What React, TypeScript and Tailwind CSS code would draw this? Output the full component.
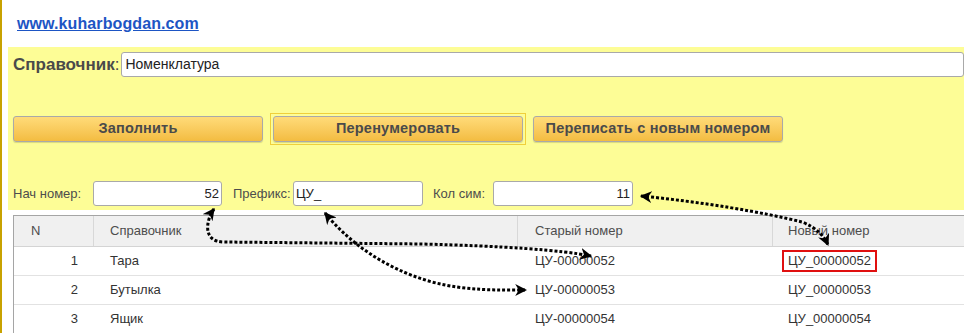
import React from "react";

const font = { fontFamily: '"Liberation Sans", Arial, sans-serif' };

function Btn({ children }: { children: React.ReactNode }) {
  return (
    <div className="w-[250px] h-[26px] rounded-[3px] border border-[#a9a9a9] bg-gradient-to-b from-[#ffdb78] to-[#f3bc40] flex items-center justify-center text-[14.5px] tracking-[0.2px] font-bold text-[#4a4a4a] shadow-[0_1px_1px_rgba(0,0,0,0.15)]">
      {children}
    </div>
  );
}

function Field({ w, value, right }: { w: string; value: string; right?: boolean }) {
  return (
    <div
      className={`${w} h-[25px] rounded-[3px] border border-[#a9a9a9] bg-white flex items-center text-[13px] text-[#222] ${
        right ? "justify-end pr-[2px]" : "pl-[2px]"
      }`}
    >
      {value}
    </div>
  );
}

const rows = [
  { n: "1", name: "Тара", old: "ЦУ-00000052", nw: "ЦУ_00000052" },
  { n: "2", name: "Бутылка", old: "ЦУ-00000053", nw: "ЦУ_00000053" },
  { n: "3", name: "Ящик", old: "ЦУ-00000054", nw: "ЦУ_00000054" },
];

export default function App() {
  return (
    <div className="relative w-[964px] h-[333px] overflow-hidden bg-white border-l-2 border-[#c8a200]" style={font}>
      <div className="h-[47px] pl-[15px] pt-[12px]">
        <a className="text-[16px] font-bold text-[#1d55c4] underline tracking-[0.1px]" href="#">
          www.kuharbogdan.com
        </a>
      </div>
      <div className="ml-[6px] h-[163px] bg-[#fdfd96] pl-[5px] pt-[5px] flex flex-col">
        <div className="flex items-center h-[25px]">
          <span className="text-[17px] font-bold text-[#4a4a4a]">Справочник</span>
          <span className="text-[17px] text-[#4a4a4a] mr-[2px]">:</span>
          <div className="flex-1 h-[25px] rounded-[3px] border border-[#a9a9a9] bg-white flex items-center pl-[3px] text-[14px] text-[#222]">
            Номенклатура
          </div>
        </div>
        <div className="flex items-center gap-[7px] mt-[36px] h-[32px]">
          <Btn>Заполнить</Btn>
          <div className="border border-[#f0cf3a] p-[2px]">
            <Btn>Перенумеровать</Btn>
          </div>
          <Btn>Переписать с новым номером</Btn>
        </div>
        <div className="flex items-center mt-[36px] h-[25px] text-[13px] text-[#4d4d4d]">
          <span className="w-[80px]">Нач номер:</span>
          <Field w="w-[129px]" value="52" right />
          <span className="ml-[11px] w-[60px]">Префикс:</span>
          <Field w="w-[130px]" value="ЦУ_" />
          <span className="ml-[10px] w-[60px]">Кол сим:</span>
          <Field w="w-[140px]" value="11" right />
        </div>
      </div>
      <div className="ml-[11px] mt-[5px] w-[1000px] border-t border-l border-[#a5a5a5] text-[13px]">
        <div className="flex h-[31px] bg-[#f0f0f0] border-b border-[#d4d4d4] text-[#4d4d4d]">
          <div className="w-[80px] border-r border-[#d8d8d8] flex items-center pl-[17px]">N</div>
          <div className="w-[424px] border-r border-[#d8d8d8] flex items-center pl-[16px]">Справочник</div>
          <div className="w-[255px] border-r border-[#d8d8d8] flex items-center pl-[17px]">Старый номер</div>
          <div className="flex-1 flex items-center pl-[15px]">Новый номер</div>
        </div>
        {rows.map((r, i) => (
          <div key={r.n} className="flex h-[29px] border-b border-[#e2e2e2] text-[#333]">
            <div className="w-[80px] flex items-center justify-end pr-[16px]">{r.n}</div>
            <div className="w-[424px] flex items-center pl-[16px]">{r.name}</div>
            <div className="w-[255px] flex items-center pl-[17px]">{r.old}</div>
            <div className="flex-1 flex items-center pl-[9px]">
              {i === 0 ? (
                <span className="border-2 border-[#e01010] px-[4px] h-[22px] flex items-center">{r.nw}</span>
              ) : (
                <span className="pl-[6px]">{r.nw}</span>
              )}
            </div>
          </div>
        ))}
      </div>
      <svg className="absolute inset-0 pointer-events-none" width="964" height="333">
        <defs>
          <marker id="ah" viewBox="0 0 10 10" refX="9" refY="5" markerWidth="4" markerHeight="4" orient="auto-start-reverse" markerUnits="strokeWidth">
            <path d="M0,0 L10,5 L0,10 L3,5 z" fill="#000" />
          </marker>
        </defs>
        <g fill="none" stroke="#000" strokeWidth="3" strokeDasharray="3 2">
          <path d="M212,209 C204,220 200,242 222,242 L420,244 C500,246 560,250 589,256" markerStart="url(#ah)" markerEnd="url(#ah)" />
          <path d="M323,213 C345,240 380,268 430,282 C465,291 495,290 524,290" markerStart="url(#ah)" markerEnd="url(#ah)" />
          <path d="M639,196 C700,202 760,212 800,222 C815,228 822,236 826,245" markerStart="url(#ah)" markerEnd="url(#ah)" />
        </g>
      </svg>
    </div>
  );
}
